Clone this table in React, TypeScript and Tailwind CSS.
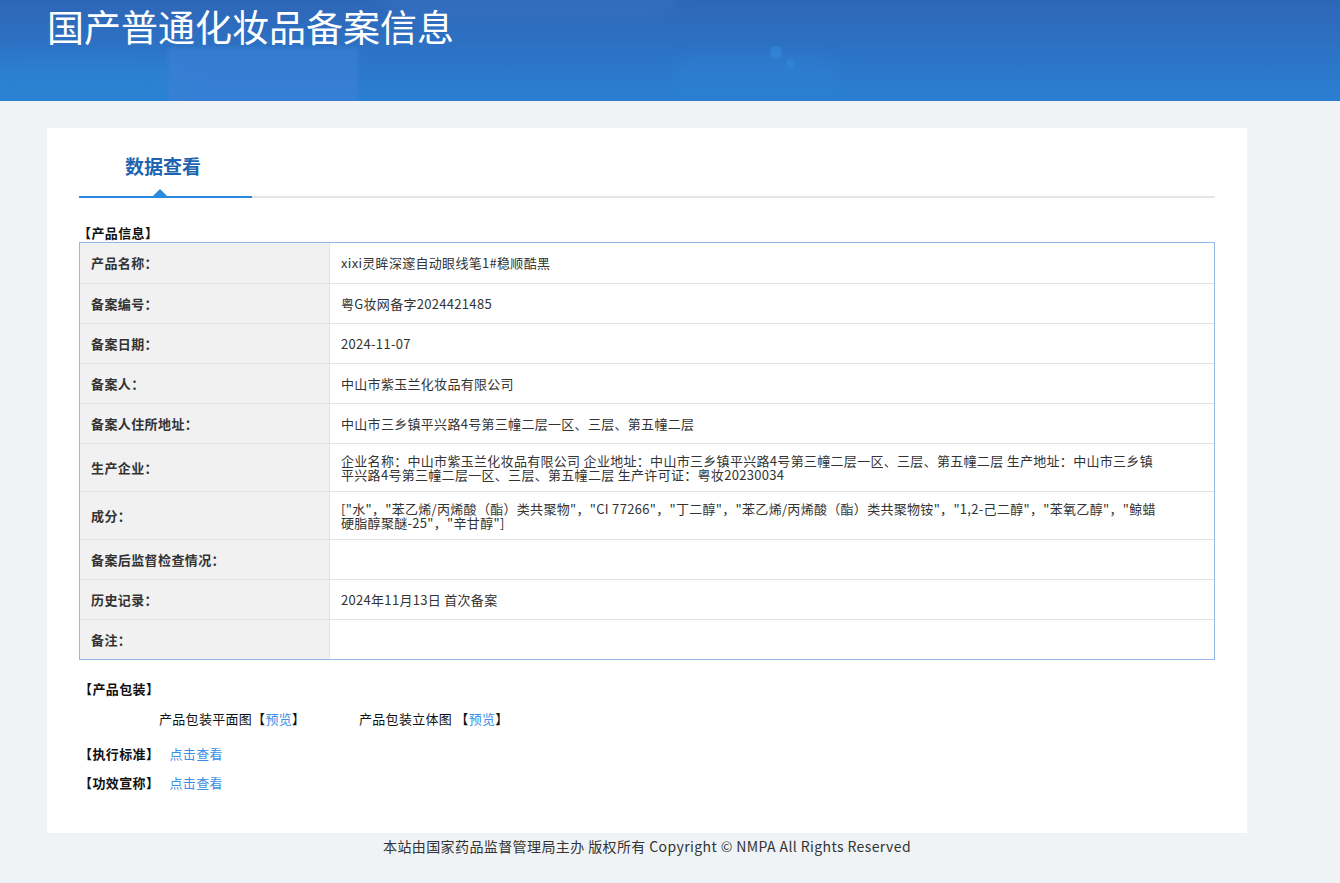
// 国产普通化妆品备案信息 — detail page

const font = "font-['Microsoft_YaHei','Noto_Sans_CJK_SC',sans-serif]";

type Row = { label: string; lines: string[]; h: string };

const rows: Row[] = [
    { label: "产品名称：", lines: ["xixi灵眸深邃自动眼线笔1#稳顺酷黑"], h: "h-[40px]" },
    { label: "备案编号：", lines: ["粤G妆网备字2024421485"], h: "h-[40px]" },
    { label: "备案日期：", lines: ["2024-11-07"], h: "h-[40px]" },
    { label: "备案人：", lines: ["中山市紫玉兰化妆品有限公司"], h: "h-[40px]" },
    { label: "备案人住所地址：", lines: ["中山市三乡镇平兴路4号第三幢二层一区、三层、第五幢二层"], h: "h-[40px]" },
    {
        label: "生产企业：",
        lines: [
            "企业名称：中山市紫玉兰化妆品有限公司 企业地址：中山市三乡镇平兴路4号第三幢二层一区、三层、第五幢二层 生产地址：中山市三乡镇",
            "平兴路4号第三幢二层一区、三层、第五幢二层 生产许可证：粤妆20230034",
        ],
        h: "h-[48px]",
    },
    {
        label: "成分：",
        lines: [
            "[\"水\"，\"苯乙烯/丙烯酸（酯）类共聚物\"，\"CI 77266\"，\"丁二醇\"，\"苯乙烯/丙烯酸（酯）类共聚物铵\"，\"1,2-己二醇\"，\"苯氧乙醇\"，\"鲸蜡",
            "硬脂醇聚醚-25\"，\"辛甘醇\"]",
        ],
        h: "h-[48px]",
    },
    { label: "备案后监督检查情况：", lines: [], h: "h-[40px]" },
    { label: "历史记录：", lines: ["2024年11月13日 首次备案"], h: "h-[40px]" },
    { label: "备注：", lines: [], h: "h-[40px]" },
];

function Header() {
    return (
        <div className="relative h-[101px] overflow-hidden bg-gradient-to-b from-[#2e66b7] to-[#2a7fd3]">
            {/* soft background shapes */}
            <div className="absolute left-[-40px] top-[60px] h-[80px] w-[240px] rounded-full bg-[#2c86d3] opacity-60 blur-md" />
            <div className="absolute left-[168px] top-[48px] h-[60px] w-[190px] bg-[#3b80d6] opacity-70 blur-[2px]" />
            <div className="absolute left-[380px] top-[-45px] h-[66px] w-[300px] rounded-full bg-[#3872c2] opacity-50 blur-sm" />
            <div className="absolute left-[770px] top-[46px] h-[14px] w-[12px] rounded-full bg-[#3585d8] opacity-80" />
            <div className="absolute left-[786px] top-[59px] h-[10px] w-[9px] rounded-full bg-[#3585d8] opacity-80" />
            <div className="absolute left-[670px] top-[55px] h-[60px] w-[170px] rounded-full bg-[#2d80d2] opacity-50 blur-sm" />
            <div className="relative ml-[47px] w-[1200px]">
                <h1 className="text-[37px] leading-[52px] text-white">国产普通化妆品备案信息</h1>
            </div>
        </div>
    );
}

function Tab() {
    return (
        <div className="mx-[32px] pt-[24px]">
            <div className="pl-[46px] text-[19px] font-bold leading-[28px] text-[#1e64b0]">数据查看</div>
            <div className="mt-[16px] flex">
                <div className="relative h-[2px] w-[173px] bg-[#2a8bdc]">
                    <div className="absolute left-[74px] top-[-7px] h-0 w-0 border-x-[7px] border-b-[7px] border-x-transparent border-b-[#2a8bdc]" />
                </div>
                <div className="h-[2px] flex-1 bg-[#e6e6e6]" />
            </div>
        </div>
    );
}

function InfoTable() {
    return (
        <div className="border border-[#95b8e9]">
            {rows.map((r, i) => (
                <div key={r.label} className={`flex ${r.h} ${i > 0 ? "border-t border-[#e3e3e3]" : ""}`}>
                    <div className="flex w-[250px] shrink-0 items-center border-r border-[#e3e3e3] bg-[#f1f1f1] pl-[11px] text-[13px] font-bold tracking-[0.4px] text-[#333]">
                        {r.label}
                    </div>
                    <div className="flex flex-1 flex-col justify-center pl-[11px] text-[13px] leading-[14px] tracking-[0.3px] text-[#333]">
                        {r.lines.map((l) => (
                            <span key={l} className="whitespace-nowrap">{l}</span>
                        ))}
                    </div>
                </div>
            ))}
        </div>
    );
}

export default function App() {
    return (
        <div className={`min-h-[883px] bg-[#eff3f6] ${font} text-[#111]`}>
            <Header />
            <div className="ml-[47px] w-[1200px]">
                <div className="mt-[27px] bg-white pb-[41px]">
                    <Tab />
                    <div className="mx-[32px] mt-[26px]">
                        <div className="ml-[-1px] text-[13px] font-bold leading-[18px] tracking-[0.4px]">【产品信息】</div>
                        <InfoTable />

                        <div className="mt-[20px] text-[13px] font-bold leading-[18px] tracking-[0.4px]">【产品包装】</div>
                        <div className="mt-[12px] flex text-[13px] leading-[18px] tracking-[0.3px]">
                            <div className="ml-[80px] w-[200px]">
                                产品包装平面图【<span className="text-[#3a8ee6]">预览</span>】
                            </div>
                            <div>
                                产品包装立体图 【<span className="text-[#3a8ee6]">预览</span>】
                            </div>
                        </div>
                        <div className="mt-[17px] flex text-[13px] leading-[18px] tracking-[0.4px]">
                            <span className="font-bold">【执行标准】</span>
                            <span className="ml-[10px] text-[#3a8ee6]">点击查看</span>
                        </div>
                        <div className="mt-[11px] flex text-[13px] leading-[18px] tracking-[0.4px]">
                            <span className="font-bold">【功效宣称】</span>
                            <span className="ml-[10px] text-[#3a8ee6]">点击查看</span>
                        </div>
                    </div>
                </div>
                <div className="pt-[3px] text-center text-[14px] leading-[20px] tracking-[0.4px] text-[#333]">
                    本站由国家药品监督管理局主办 版权所有 Copyright © NMPA All Rights Reserved
                </div>
            </div>
        </div>
    );
}
